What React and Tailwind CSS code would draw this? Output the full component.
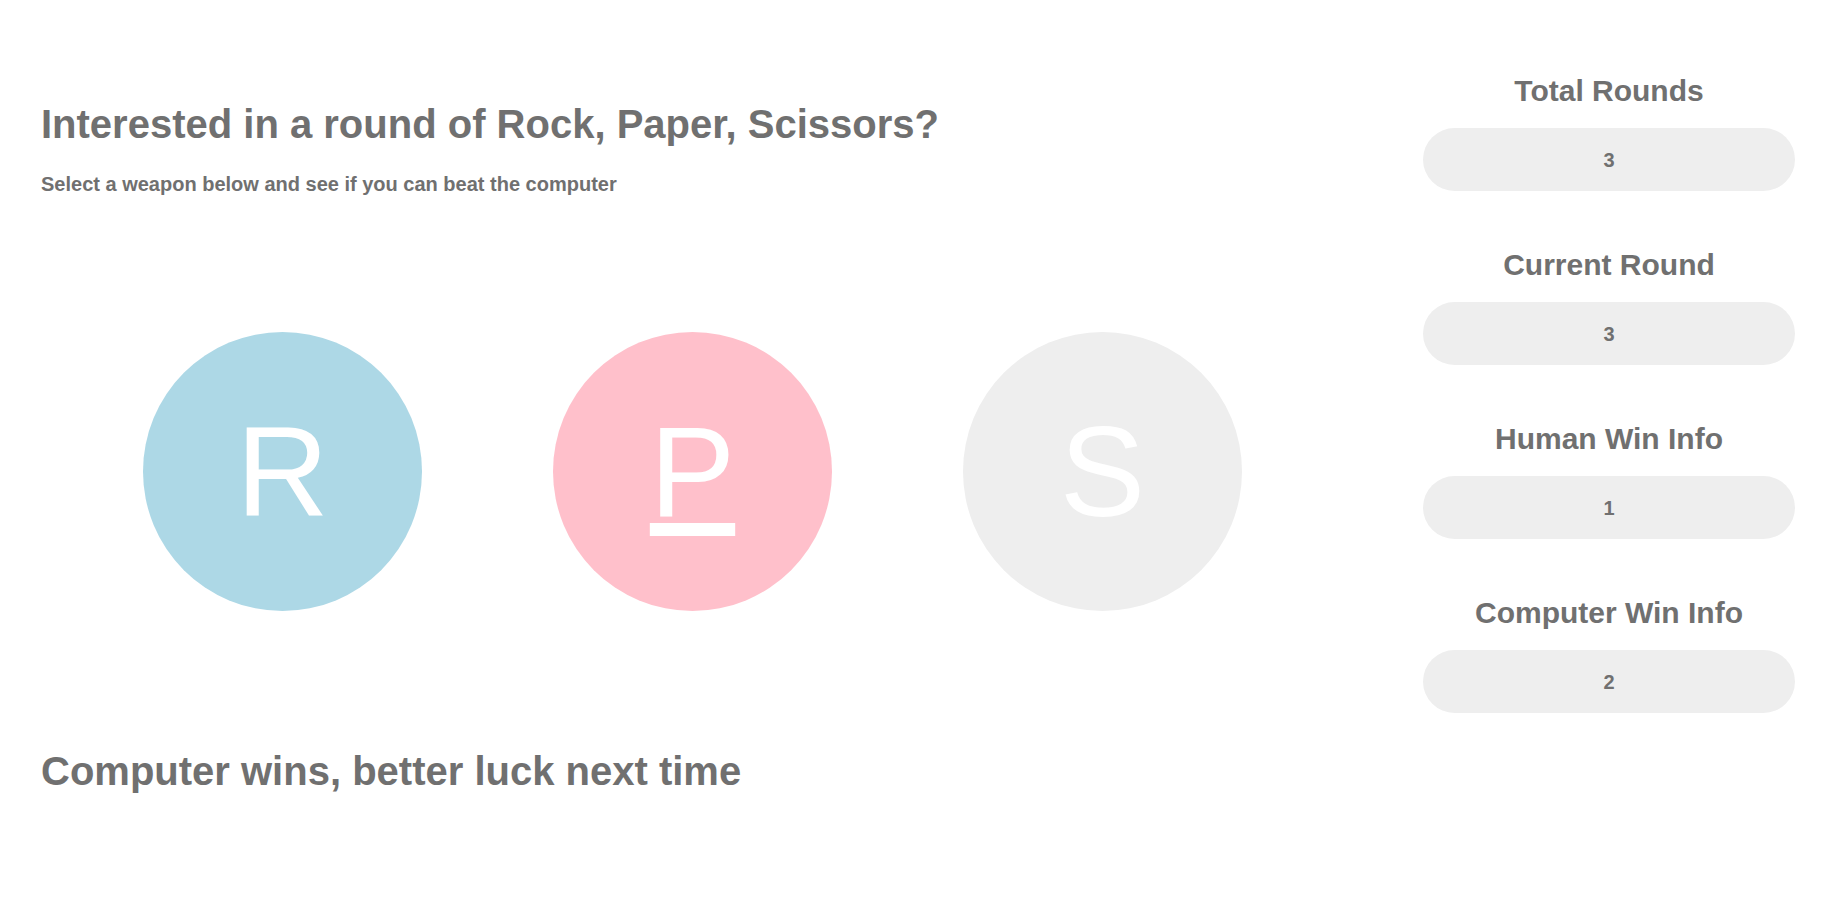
import React, { useState } from "react";

const weapons = [
  { key: "R", bg: "bg-[#add8e6]" },
  { key: "P", bg: "bg-[#ffc0cb]" },
  { key: "S", bg: "bg-[#eeeeee]" },
];

const stats = [
  { label: "Total Rounds", value: 3 },
  { label: "Current Round", value: 3 },
  { label: "Human Win Info", value: 1 },
  { label: "Computer Win Info", value: 2 },
];

const App = () => {
  const [selected, setSelected] = useState("P");

  return (
    <div className="min-h-screen w-full bg-white font-['Liberation_Sans',Arial,sans-serif] text-[#707070]">
      <div className="flex items-start justify-between pl-[41px] pr-[34px] pt-[73px]">
        {/* Game area */}
        <div className="flex-1 mt-[27px]">
          <h1 className="text-[40px] leading-[48px] font-bold">
            Interested in a round of Rock, Paper, Scissors?
          </h1>
          <h4 className="mt-[24px] text-[20px] leading-[24px] font-bold">
            Select a weapon below and see if you can beat the computer
          </h4>

          <div className="mt-[136px] ml-[102px] flex gap-[131px]">
            {weapons.map((w) => (
              <button
                key={w.key}
                onClick={() => setSelected(w.key)}
                className={`flex h-[279px] w-[279px] items-center justify-center rounded-full ${w.bg} text-[128px] leading-none font-normal text-white`}
              >
                <span
                  className={
                    selected === w.key
                      ? "underline decoration-[13px] underline-offset-[7px]"
                      : ""
                  }
                >
                  {w.key}
                </span>
              </button>
            ))}
          </div>

          <h1 className="mt-[136px] text-[40px] leading-[48px] font-bold">
            Computer wins, better luck next time
          </h1>
        </div>

        {/* Score board */}
        <div className="flex w-[372px] flex-col">
          {stats.map((s) => (
            <div key={s.label} className="flex flex-col items-center pb-[56px]">
              <h2 className="text-[30px] leading-[36px] font-bold">{s.label}</h2>
              <div className="mt-[19px] flex h-[63px] w-full items-center justify-center rounded-full bg-[#eeeeee] text-[20px] font-bold">
                {s.value}
              </div>
            </div>
          ))}
        </div>
      </div>
    </div>
  );
};

export default App;
